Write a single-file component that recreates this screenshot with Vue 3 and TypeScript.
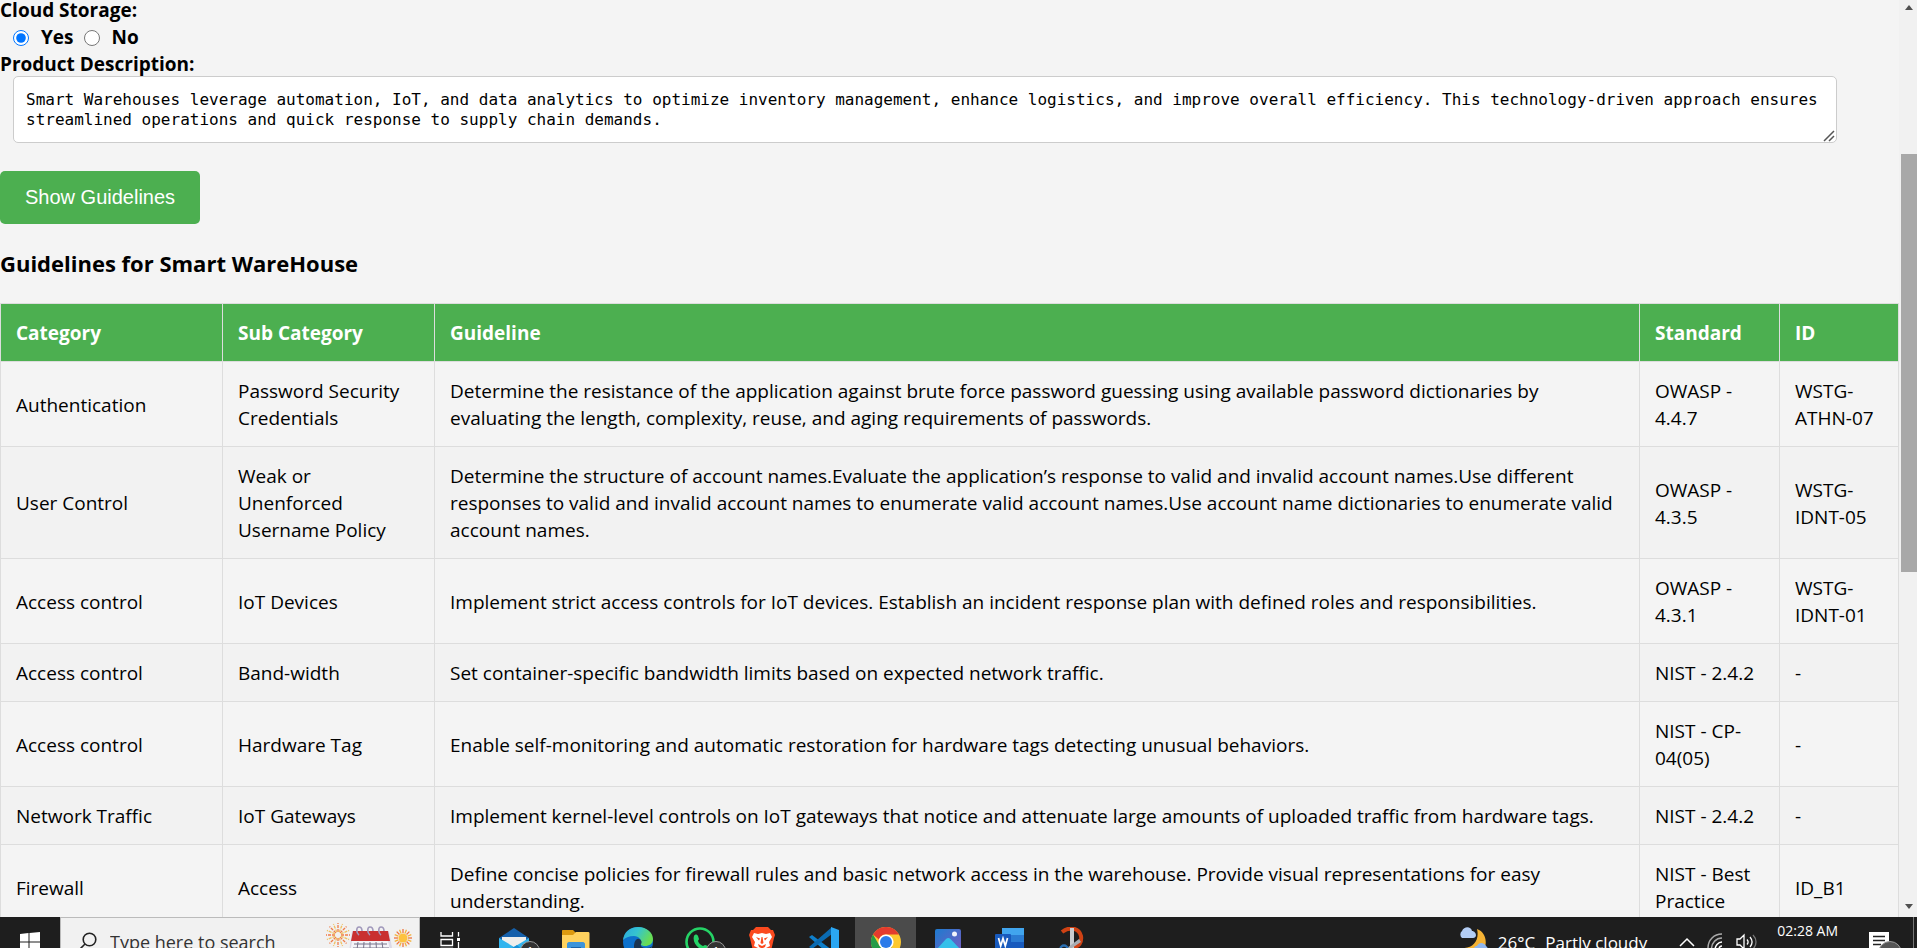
<script setup lang="ts">
import { ref } from 'vue'

interface Guideline {
  category: string
  sub: string
  text: string
  standard: string
  id: string
}

const cloudStorage = ref('yes')
const description = ref(
  'Smart Warehouses leverage automation, IoT, and data analytics to optimize inventory management, enhance logistics, and improve overall efficiency. This technology-driven approach ensures streamlined operations and quick response to supply chain demands.',
)

const guidelines: Guideline[] = [
  {
    category: 'Authentication',
    sub: 'Password Security Credentials',
    text: 'Determine the resistance of the application against brute force password guessing using available password dictionaries by evaluating the length, complexity, reuse, and aging requirements of passwords.',
    standard: 'OWASP - 4.4.7',
    id: 'WSTG-ATHN-07',
  },
  {
    category: 'User Control',
    sub: 'Weak or Unenforced Username Policy',
    text: 'Determine the structure of account names.Evaluate the application’s response to valid and invalid account names.Use different responses to valid and invalid account names to enumerate valid account names.Use account name dictionaries to enumerate valid account names.',
    standard: 'OWASP - 4.3.5',
    id: 'WSTG-IDNT-05',
  },
  {
    category: 'Access control',
    sub: 'IoT Devices',
    text: 'Implement strict access controls for IoT devices. Establish an incident response plan with defined roles and responsibilities.',
    standard: 'OWASP - 4.3.1',
    id: 'WSTG-IDNT-01',
  },
  {
    category: 'Access control',
    sub: 'Band-width',
    text: 'Set container-specific bandwidth limits based on expected network traffic.',
    standard: 'NIST - 2.4.2',
    id: '-',
  },
  {
    category: 'Access control',
    sub: 'Hardware Tag',
    text: 'Enable self-monitoring and automatic restoration for hardware tags detecting unusual behaviors.',
    standard: 'NIST - CP-04(05)',
    id: '-',
  },
  {
    category: 'Network Traffic',
    sub: 'IoT Gateways',
    text: 'Implement kernel-level controls on IoT gateways that notice and attenuate large amounts of uploaded traffic from hardware tags.',
    standard: 'NIST - 2.4.2',
    id: '-',
  },
  {
    category: 'Firewall',
    sub: 'Access',
    text: 'Define concise policies for firewall rules and basic network access in the warehouse. Provide visual representations for easy understanding.',
    standard: 'NIST - Best Practice',
    id: 'ID_B1',
  },
]

const rays = Array.from({ length: 16 }, (_, i) => i * 22.5)
</script>

<template>
  <div class="screen">
    <div class="viewport">
      <main class="page">
        <form class="form" @submit.prevent>
          <div class="line" id="cloud-label">Cloud Storage:</div>
          <div class="line radios" role="radiogroup" aria-labelledby="cloud-label">
            <input id="cloud-yes" v-model="cloudStorage" type="radio" name="cloud" value="yes" />
            <label for="cloud-yes">Yes</label>
            <input id="cloud-no" v-model="cloudStorage" type="radio" name="cloud" value="no" />
            <label for="cloud-no">No</label>
          </div>
          <label class="line" for="description">Product Description:</label>
          <div class="area">
            <textarea id="description" v-model="description" rows="2" spellcheck="false"></textarea>
            <svg class="grip" width="12" height="12" viewBox="0 0 12 12" fill="none" stroke="#555" stroke-width="1.500">
              <path d="M1 11 11 1M6 11l5-5" />
            </svg>
          </div>
          <button type="submit" class="submit">Show Guidelines</button>
        </form>
        <h3>Guidelines for Smart WareHouse</h3>
        <table>
          <colgroup>
            <col class="c-category" />
            <col class="c-sub" />
            <col />
            <col class="c-standard" />
            <col class="c-id" />
          </colgroup>
          <thead>
            <tr>
              <th>Category</th>
              <th>Sub Category</th>
              <th>Guideline</th>
              <th>Standard</th>
              <th>ID</th>
            </tr>
          </thead>
          <tbody>
            <tr v-for="(g, i) in guidelines" :key="i">
              <td>{{ g.category }}</td>
              <td>{{ g.sub }}</td>
              <td>{{ g.text }}</td>
              <td>{{ g.standard }}</td>
              <td>{{ g.id }}</td>
            </tr>
          </tbody>
        </table>
      </main>
      <div class="scrollbar" aria-hidden="true">
        <svg width="16" height="16" viewBox="0 0 16 16"><path d="M4 10h8L8 5z" fill="#505050" /></svg>
        <div class="track"><div class="thumb"></div></div>
        <svg width="16" height="22" viewBox="0 0 16 22"><path d="M4 9h8l-4 5z" fill="#505050" /></svg>
      </div>
    </div>

    <footer class="taskbar">
      <button class="start" aria-label="Start">
        <svg width="20" height="20" viewBox="0 0 20 20" fill="#fff">
          <path d="M0 2 8.500 1v8.500H0zM9.500.9 20 0v9.500H9.500zM0 10.500h8.500V19L0 18zM9.500 10.500H20V20L9.500 19z" />
        </svg>
      </button>
      <label class="search">
        <svg class="glass" width="20" height="20" viewBox="0 0 20 20" fill="none" stroke="#222" stroke-width="1.600">
          <circle cx="11.500" cy="7.500" r="6.300" />
          <path d="M7 12l-6 6" />
        </svg>
        <input type="text" placeholder="Type here to search" aria-label="Search" />
        <svg class="art" width="92" height="30" viewBox="0 0 92 30">
          <g fill="none" stroke-width="1.300">
            <path v-for="a in rays" :key="a" d="M13 5V-4" stroke-dasharray="3 1" :transform="`rotate(${a} 13 8)`" :stroke="a % 45 ? '#f0c060' : '#ef7d4a'" />
            <path v-for="a in rays" :key="'b' + a" d="M78 6V2" :transform="`rotate(${a} 78 11)`" :stroke="a % 45 ? '#f5b23c' : '#ee7440'" />
          </g>
          <circle cx="78" cy="11" r="4.500" fill="#fdc23f" />
          <path d="M27 4h37l5 28H23z" fill="#dcd9e6" />
          <path d="M28 4h35l2 10H26z" fill="#c93030" />
          <path d="M27 14h36l4 18H24z" fill="#f4f3f8" />
          <path d="M29 17h33M28 21h36M27 26h38M33 15l-2 15M39 15l-1 15M45 15v15M51 15l1 15M57 15l2 15" stroke="#77738a" stroke-width="1" />
          <g fill="none" stroke="#a199bb" stroke-width="1.600">
            <path d="M34 8c-3-2-3-8 0-8 2 0 3 2 3 4" />
            <path d="M45 8c-3-2-3-8 0-8 2 0 3 2 3 4" />
            <path d="M56 8c-3-2-3-8 0-8 2 0 3 2 3 4" />
          </g>
        </svg>
      </label>
      <button class="view" aria-label="Task View">
        <svg width="20" height="20" viewBox="0 0 20 20" fill="none" stroke="#fff" stroke-width="1.300">
          <path d="M1 0v4h11.500V0M1 7.500h11.500v6H1zM1 20v-3.500h11.500V20M18.500 0v4.500M18.500 10v10" />
          <path d="M17 6h3v3h-3z" fill="#fff" stroke="none" />
        </svg>
      </button>

      <nav class="apps">
        <button aria-label="Mail">
          <svg width="30" height="30" viewBox="0 0 30 30">
            <path d="M0 11 15 1l15 10v18H0z" fill="#1560ab" />
            <path d="M3 10h24v14H3z" fill="#eeeeec" />
            <path d="M0 11l15 9 15-9v18H0z" fill="#31b4ee" />
            <path d="M0 29 18 18l12 11z" fill="#178fd5" />
          </svg>
          <span class="badge">1</span>
        </button>
        <button aria-label="File Explorer">
          <svg width="30" height="30" viewBox="0 0 30 30">
            <path d="M1 4c0-1 .5-1 1-1h10l3 3v3H1z" fill="#dc9a10" />
            <path d="M1 8h11l3-3h12c1 0 1.500.5 1.500 1.500V26H1z" fill="#ffd25e" />
            <path d="M6 26V17c0-1 .8-2 2-2h14c1 0 2 1 2 2v9z" fill="#3d94da" />
            <path d="M10 20h10v2H10z" fill="#1b62a7" />
          </svg>
        </button>
        <button aria-label="Edge">
          <svg width="30" height="30" viewBox="0 0 30 30">
            <defs>
              <linearGradient id="edge-top" x1="0" y1="0" x2="1" y2=".4">
                <stop offset="0" stop-color="#2aa8df" />
                <stop offset=".5" stop-color="#35c4cf" />
                <stop offset="1" stop-color="#68dd52" />
              </linearGradient>
            </defs>
            <circle cx="15" cy="15" r="15" fill="#0d71cc" />
            <path d="M0 13C1 5 7 0 15 0c9 0 15 6 15 12 0 5-4 7-8 7-3 0-5-1-4-3 1-3-2-7-7-7-5 0-9 2-11 4z" fill="url(#edge-top)" />
            <path d="M11 20c0-5 2-9 5-8 3 1 3 4 2 5-1 2 1 4 5 4 3 0 5-1 6-2-1 4-5 7-9 6-5 0-9-2-9-5z" fill="#1b3450" />
          </svg>
        </button>
        <button aria-label="WhatsApp">
          <svg width="30" height="30" viewBox="0 0 30 30">
            <circle cx="15" cy="15" r="13.500" fill="#1e1e1e" stroke="#25d366" stroke-width="2.600" />
            <path d="M9 9c1-2 3-2 4 0l1 3c0 1-1 1-1 2 1 3 3 4 5 5l2-1 3 1c1 1 0 4-3 4C13 23 7 15 9 9z" fill="#25d366" />
          </svg>
          <span class="badge">1</span>
        </button>
        <button aria-label="Brave">
          <svg width="26" height="30" viewBox="0 0 26 30">
            <path d="M7 0h12l3 3h2l2 5-1 3-3 13-9 6-9-6L1 11 0 8l2-5h2z" fill="#fb4a1f" />
            <path d="M5 6l4 1 4-1 4 1 4-1 2 4-3 5 1 4-4 2-4 4-4-4-4-2 1-4-3-5z" fill="#fff" />
            <path d="M7 10l4 1.500-1 2zM19 10l-4 1.500 1 2zM12.500 10h1l1 6-1.500 1-1.500-1zM9 17l4 2 4-2-1 3-3 1.500-3-1.500z" fill="#fb4a1f" />
          </svg>
        </button>
        <button aria-label="Visual Studio Code">
          <svg width="30" height="30" viewBox="0 0 30 30">
            <path d="M0 10l3-2 20 15v7z" fill="#0f7fca" />
            <path d="M0 20l3 2L23 7V0z" fill="#0a6bb3" />
            <path d="M22 0l8 3v24l-8 3z" fill="#2ba7f3" />
          </svg>
        </button>
        <button class="active" aria-label="Chrome">
          <svg width="30" height="30" viewBox="0 0 30 30">
            <circle cx="15" cy="15" r="15" fill="#fdc82f" />
            <path d="M2 7.500A15 15 0 0 1 28 7.500H15a7.500 7.500 0 0 0-7 5z" fill="#e33b2e" />
            <path d="M2 7.500A15 15 0 0 0 15 30l6.500-11.200A7.500 7.500 0 0 1 8.500 18.700z" fill="#259b48" />
            <circle cx="15" cy="15" r="7.600" fill="#fff" />
            <circle cx="15" cy="15" r="6" fill="#2b7be9" />
          </svg>
        </button>
        <button aria-label="Photos">
          <svg width="26" height="26" viewBox="0 0 26 26">
            <defs>
              <linearGradient id="photo-sky" x1="0" y1="0" x2="1" y2="1">
                <stop offset="0" stop-color="#1d7bd0" />
                <stop offset="1" stop-color="#7b5bc0" />
              </linearGradient>
            </defs>
            <rect width="26" height="26" rx="2" fill="url(#photo-sky)" />
            <circle cx="19.500" cy="5" r="2.500" fill="#f2f4fb" />
            <path d="M2 20 11 10c1.500-1.500 3-1.500 4.500 0L26 21v5H2z" fill="#35c0ea" />
          </svg>
        </button>
        <button aria-label="Word">
          <svg width="30" height="28" viewBox="0 0 30 28">
            <path d="M7 0h22v7H7z" fill="#41a5ee" />
            <path d="M7 7h22v7H7z" fill="#2b7cd3" />
            <path d="M7 14h22v7H7z" fill="#185abd" />
            <path d="M7 21h22v7H7z" fill="#103f91" />
            <rect y="6" width="16" height="16" rx="1" fill="#185abd" />
            <path d="M3.500 10l2.200 8L8 10.500l2.300 7.500 2.200-8" fill="none" stroke="#fff" stroke-width="1.700" />
          </svg>
        </button>
        <button aria-label="Snipping Tool">
          <svg width="30" height="30" viewBox="0 0 30 30">
            <path d="M5 5C13-1 22 1 24 9c1 6-2 11-8 11" fill="none" stroke="#cf4214" stroke-width="4" />
            <path d="M13 1h4v28h-4z" fill="#c9ccd0" />
            <path d="M22 12l-12 9 2 2 12-8z" fill="#a8adb3" />
            <circle cx="7" cy="22" r="3.500" fill="none" stroke="#2a6fb2" stroke-width="2.500" />
          </svg>
        </button>
      </nav>

      <div class="tray">
        <button class="weather">
          <svg width="30" height="30" viewBox="0 0 30 30">
            <path d="M19 2c12 4 12 24-2 25-7 1-12-2-14-6 11 1 19-7 16-19z" fill="#f5b335" />
            <path d="M4 11a4.500 4.500 0 0 1 0-7c2-5 9-5 10 0 4 0 6 7 1 7z" fill="#b3cdf4" />
            <path d="M16 25c-1-4 1-6 3-6 2-5 8-3 9 0 3 2 2 6 0 6z" fill="#8fb6ef" />
          </svg>
          <span>26°C</span><span>Partly cloudy</span>
        </button>
        <div class="status">
          <svg width="16" height="10" viewBox="0 0 16 10" fill="none" stroke="#fff" stroke-width="1.500"><path d="M1 9l7-7 7 7" /></svg>
          <svg width="17" height="18" viewBox="0 0 17 18" fill="none" stroke-width="1.500">
            <path d="M1 15C1 7 7 1 15 1M4.500 16C4.500 10 9 5 15 5" stroke="#aaa" />
            <path d="M8 17c0-4 3-8 7-8M12 17c0-2 1-4 3-4" stroke="#fff" />
          </svg>
          <svg width="21" height="18" viewBox="0 0 21 18" fill="none" stroke="#fff" stroke-width="1.300">
            <path d="M1 6h3l4-4v14l-4-4H1zM11 6.500c1.300 1.500 1.300 3.500 0 5M14 4c2.500 3 2.500 7 0 10" />
            <path d="M17 2c4 4 4 10 0 14" stroke="#777" />
          </svg>
        </div>
        <time>02:28 AM</time>
        <button class="notes" aria-label="Notifications">
          <svg width="20" height="20" viewBox="0 0 20 20">
            <path d="M0 0h20v16h-9l-4 4v-4H0z" fill="#fff" />
            <path d="M4 4.500h12M4 8.500h12M4 12.500h8" stroke="#222" stroke-width="1.300" />
          </svg>
          <span class="badge">27</span>
        </button>
      </div>
    </footer>
  </div>
</template>

<style>
body {
  margin: 0;
  overflow: hidden;
}
</style>

<style scoped>
.screen {
  display: flex;
  flex-direction: column;
  height: 100vh;
  overflow: hidden;
  background: #f4f4f4;
  color: #000;
  font: 19px/27px "Segoe UI", "Open Sans", "Noto Sans", sans-serif;
}
.viewport {
  display: flex;
  flex: 1;
  min-height: 0;
}
.page {
  flex: 1;
  min-width: 0;
  margin-top: -3px;
  overflow: hidden;
}
.form {
  display: flex;
  flex-direction: column;
  align-items: flex-start;
}
.line {
  font-weight: 700;
}
.radios {
  display: flex;
  align-items: center;
}
.radios input {
  width: 16px;
  height: 16px;
  margin: 0 12px 0 13px;
  accent-color: #0075ff;
}
.radios label + input {
  margin-left: 10px;
}
.area {
  position: relative;
  display: flex;
  align-self: stretch;
  margin: -2px 62px 0 13px;
}
textarea {
  flex: 1;
  box-sizing: border-box;
  height: 67px;
  padding: 13px 12px;
  border: 1px solid #ccc;
  border-radius: 5px;
  background: #fff;
  color: #000;
  font: 16px/20px Consolas, "DejaVu Sans Mono", monospace;
  overflow: hidden;
  resize: none;
}
.grip {
  position: absolute;
  right: 2px;
  bottom: 1px;
  pointer-events: none;
}
.submit {
  margin-top: 28px;
  height: 53px;
  padding: 0 25px;
  border: 0;
  border-radius: 5px;
  background: #4caf50;
  color: #fff;
  font: 20px/27px Arial, "Liberation Sans", sans-serif;
}
h3 {
  margin: 24px 0;
  font-size: 22px;
  line-height: 31px;
}
table {
  width: 100%;
  table-layout: fixed;
  border-collapse: collapse;
}
.c-category {
  width: 222px;
}
.c-sub {
  width: 212px;
}
.c-standard {
  width: 140px;
}
.c-id {
  width: 119px;
}
th,
td {
  padding: 16px 15px 14px;
  border: 1px solid #ddd;
  text-align: left;
}
th {
  background: #4caf50;
  color: #fff;
}
tbody tr:nth-child(even) {
  background: #f2f2f2;
}
.scrollbar {
  display: flex;
  flex-direction: column;
  width: 16px;
  padding-left: 2px;
  background: #f1f1f1;
}
.track {
  flex: 1;
}
.thumb {
  height: 418px;
  margin-top: 138px;
  background: #a8a8a8;
}

.taskbar {
  display: flex;
  align-items: flex-start;
  height: 31px;
  overflow: hidden;
  background: #1e1e1e;
  color: #fff;
}
button {
  font-family: inherit;
}
.taskbar button {
  display: flex;
  align-items: center;
  justify-content: center;
  height: 50px;
  padding: 0;
  border: 0;
  background: none;
  color: inherit;
}
.taskbar .start,
.taskbar .view {
  width: 60px;
}
.search {
  display: flex;
  align-items: center;
  box-sizing: border-box;
  width: 360px;
  height: 50px;
  padding: 0 2px 0 17px;
  border: 1px solid #bbb;
  background: #f1f1f1;
}
.search input {
  flex: 1;
  min-width: 0;
  margin-left: 12px;
  padding: 0;
  border: 0;
  background: none;
  font: 18px/24px "Segoe UI", "Open Sans", sans-serif;
}
.search input::placeholder {
  color: #333;
  opacity: 1;
}
.art {
  flex: none;
  overflow: visible;
}
.apps {
  display: flex;
  gap: 1px;
  margin-left: 3px;
}
.apps button {
  position: relative;
  width: 61px;
}
.taskbar .active {
  background: #4b4b4b;
}
.badge {
  position: absolute;
  left: 37px;
  top: 24px;
  width: 18px;
  height: 18px;
  border: 1px solid #999;
  border-radius: 50%;
  background: #333;
  color: #fff;
  font-size: 13px;
  line-height: 18px;
  text-align: center;
}
.tray {
  display: flex;
  align-items: flex-start;
  margin-left: auto;
}
.taskbar .weather {
  gap: 10px;
  font-size: 17px;
}
.status {
  display: flex;
  align-items: center;
  gap: 12px;
  height: 50px;
  margin-left: 32px;
}
time {
  margin-left: 20px;
  font-size: 14px;
  line-height: 28px;
}
.taskbar .notes {
  position: relative;
  box-sizing: border-box;
  justify-content: flex-start;
  width: 45px;
  margin: 0 3px 0 31px;
  border-right: 1px solid #777;
}
.notes .badge {
  left: 9px;
  width: 22px;
  height: 22px;
  background: #555;
  line-height: 22px;
}
</style>
